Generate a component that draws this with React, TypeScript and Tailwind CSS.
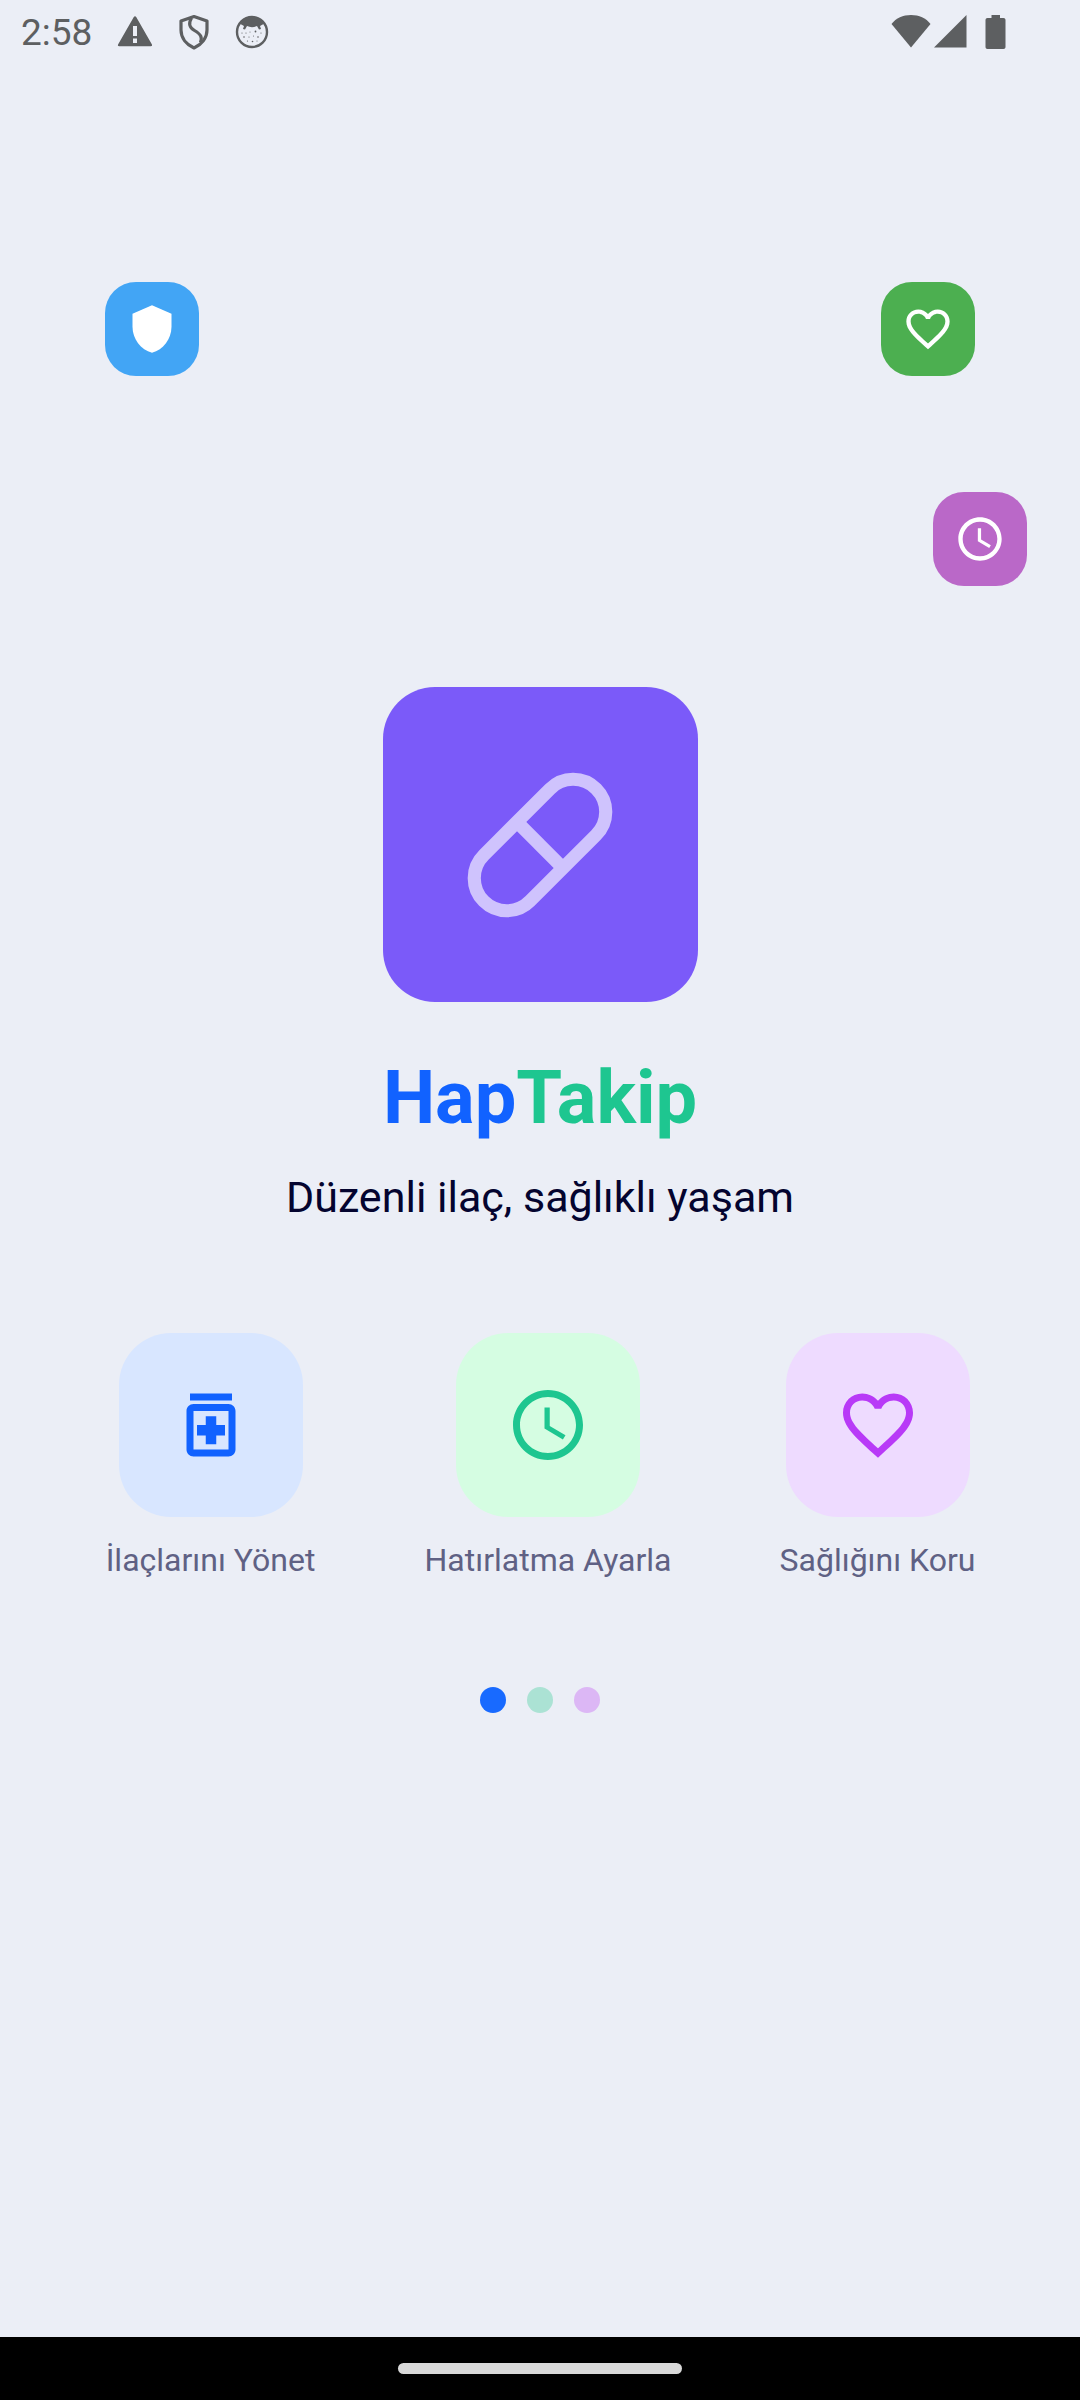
import type { ReactNode } from 'react';
import { MdAccessTime, MdFavoriteBorder, MdOutlineMedication, MdShield } from 'react-icons/md';

function StatusBar() {
  return (
    <header className="flex h-[63px] items-center justify-between pl-[21px] pr-[74px] text-[#5d5f61]">
      <div className="flex items-center">
        <span className="pt-[3px] text-[37px] leading-[44px]">2:58</span>
        <svg className="ml-[25px] h-9 w-9" viewBox="0 0 36 36" aria-hidden="true">
          <path
            fill="currentColor"
            fillRule="evenodd"
            d="M16.800 3 1.200 30.300c-.7 1.200-.2 2 1 2h31.600c1.200 0 1.700-.8 1-2L19.200 3c-.7-1-1.700-1-2.400 0zM16 12h4v10h-4zM16 24.500h4V29h-4z"
          />
        </svg>
        <svg className="ml-[23px] h-9 w-9" viewBox="0 0 36 36" aria-hidden="true">
          <g fill="none" stroke="currentColor" strokeWidth="3.200" strokeLinejoin="round">
            <path d="M18 2.500 5 7v9c0 8 5.500 14.500 13 18 7.500-3.500 13-10 13-18V7z" />
            <path d="M15.500 4c-3.500 6-2 9.500 3 12.500 6.500 4 8 6.500 6 12" />
          </g>
        </svg>
        <svg className="ml-[22px] h-9 w-9" viewBox="0 0 36 36" aria-hidden="true">
          <circle cx="18" cy="18" r="15" fill="none" stroke="currentColor" strokeWidth="2.400" />
          <path
            fill="currentColor"
            d="M5.500 9.500C8 5 12.500 2.500 18 2.500S28 5 30.500 9.500L26 12l1 3-2 .500-2-3.500c-3 1.500-7 1.500-10 0l-2 3.500-2-.500 1-3z"
          />
          <g fill="currentColor">
            <circle cx="8" cy="19" r=".6" />
            <circle cx="12" cy="19" r=".6" />
            <circle cx="16" cy="18" r=".5" />
            <circle cx="21.500" cy="17.500" r=".9" />
            <circle cx="27" cy="19" r=".6" />
            <circle cx="10" cy="23" r=".8" />
            <circle cx="15" cy="23" r=".6" />
            <circle cx="19.500" cy="22" r=".5" />
            <circle cx="24" cy="23" r=".8" />
            <circle cx="13.500" cy="27" r=".6" />
            <circle cx="18.500" cy="27.500" r=".8" />
            <circle cx="23" cy="27" r=".5" />
          </g>
        </svg>
      </div>
      <div className="flex items-center">
        <svg className="h-9 w-10" viewBox="0 0 40 36" fill="currentColor" aria-hidden="true">
          <path d="M20 33.500.5 10C5 4 12 1 20 1s15 3 19.500 9z" />
        </svg>
        <svg className="ml-[2px] h-9 w-[34px]" viewBox="0 0 34 36" fill="currentColor" aria-hidden="true">
          <path d="M1 33.500 33.500 1v32.500z" />
        </svg>
        <svg className="ml-[18px] h-9 w-[21px]" viewBox="0 0 21 36" fill="currentColor" aria-hidden="true">
          <path d="M6.500 1h8.500v3h3.500c1.200 0 2 .8 2 2v27c0 1.200-.8 2-2 2h-16c-1.200 0-2-.8-2-2V6c0-1.200.8-2 2-2h4z" />
        </svg>
      </div>
    </header>
  );
}

function FloatingBadge({ color, children }: { color: string; children: ReactNode }) {
  return (
    <div className={`flex size-[94px] items-center justify-center rounded-[31px] text-[52px] text-white ${color}`}>
      {children}
    </div>
  );
}

function PillIcon() {
  return (
    <svg
      className="size-[158px] text-[#cfc3fd]"
      viewBox="0 0 24 24"
      fill="none"
      stroke="currentColor"
      strokeWidth="2"
      aria-hidden="true"
    >
      <path d="m10.500 20.500 10-10a4.950 4.950 0 1 0-7-7l-10 10a4.950 4.950 0 1 0 7 7Z" />
      <path d="m8.500 8.500 7 7" />
    </svg>
  );
}

const features = [
  { label: 'İlaçlarını Yönet', tile: 'bg-[#d8e6ff] text-[#1162ff]', width: 'min-w-[218px]', icon: <MdOutlineMedication /> },
  { label: 'Hatırlatma Ayarla', tile: 'bg-[#d5fde2] text-[#1ec690]', width: 'min-w-[254px]', icon: <MdAccessTime /> },
  { label: 'Sağlığını Koru', tile: 'bg-[#eedbff] text-[#b83af7]', width: 'min-w-[202px]', icon: <MdFavoriteBorder /> },
];

export default function App() {
  return (
    <div className="flex min-h-screen flex-col bg-[#ebeef6] font-['Roboto',sans-serif]">
      <StatusBar />

      <main className="flex flex-1 flex-col">
        <div className="mt-[219px] flex justify-between px-[105px]">
          <FloatingBadge color="bg-[#42a5f5]">
            <MdShield />
          </FloatingBadge>
          <FloatingBadge color="bg-[#4caf50]">
            <MdFavoriteBorder />
          </FloatingBadge>
        </div>
        <div className="mt-[116px] flex justify-end pr-[53px]">
          <FloatingBadge color="bg-[#ba68c8]">
            <MdAccessTime />
          </FloatingBadge>
        </div>

        <section className="mt-[101px] flex flex-col items-center">
          <div className="flex size-[315px] items-center justify-center rounded-[52px] bg-[#7b5af9]">
            <PillIcon />
          </div>
          <h1 className="mt-[53px] text-[74px] leading-[86px] font-bold text-[#1162ff]">
            Hap<span className="text-[#1ec690]">Takip</span>
          </h1>
          <p className="mt-[26px] text-[43px] leading-[60px] text-[#04042f]">Düzenli ilaç, sağlıklı yaşam</p>
        </section>

        <ul className="mt-[106px] flex justify-evenly">
          {features.map((feature) => (
            <li key={feature.label} className={`flex flex-col items-center ${feature.width}`}>
              <div className={`flex size-[184px] items-center justify-center rounded-[52px] text-[84px] ${feature.tile}`}>
                {feature.icon}
              </div>
              <span className="mt-[21px] text-[32px] leading-[44px] text-[#5f6184]">{feature.label}</span>
            </li>
          ))}
        </ul>

        <div className="mt-[105px] flex justify-center gap-[21px]">
          <span className="size-[26px] rounded-full bg-[#186aff]" />
          <span className="size-[26px] rounded-full bg-[#abe2d4]" />
          <span className="size-[26px] rounded-full bg-[#dcb7f5]" />
        </div>
      </main>

      <footer className="flex h-[63px] items-center justify-center bg-black">
        <div className="h-[11px] w-[284px] rounded-full bg-[#d9d9d9]" />
      </footer>
    </div>
  );
}
